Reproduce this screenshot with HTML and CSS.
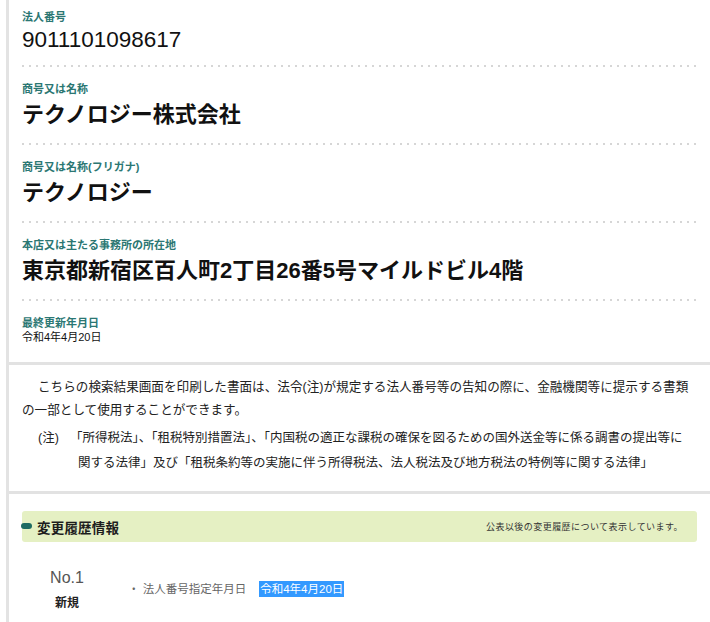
FILE: index.html
```html
<!DOCTYPE html>
<html lang="ja">
<head>
<meta charset="utf-8">
<title>法人番号 検索結果</title>
<link rel="stylesheet" href="styles.css">
</head>
<body>
<div class="page">
  <section class="info">
    <div class="field first">
      <div class="label">法人番号</div>
      <div class="value num">9011101098617</div>
    </div>
    <div class="dots"></div>
    <div class="field">
      <div class="label">商号又は名称</div>
      <div class="value">テクノロジー株式会社</div>
    </div>
    <div class="dots"></div>
    <div class="field">
      <div class="label">商号又は名称(フリガナ)</div>
      <div class="value">テクノロジー</div>
    </div>
    <div class="dots"></div>
    <div class="field">
      <div class="label">本店又は主たる事務所の所在地</div>
      <div class="value">東京都新宿区百人町2丁目26番5号マイルドビル4階</div>
    </div>
    <div class="dots"></div>
    <div class="field last">
      <div class="label">最終更新年月日</div>
      <div class="date">令和4年4月20日</div>
    </div>
  </section>
  <div class="sep"></div>
  <section class="notice">
    <p class="lead">こちらの検索結果画面を印刷した書面は、法令(注)が規定する法人番号等の告知の際に、金融機関等に提示する書類<br>の一部として使用することができます。</p>
    <p class="note"><span class="note-mark">(注)</span>「所得税法」、「租税特別措置法」、「内国税の適正な課税の確保を図るための国外送金等に係る調書の提出等に<br>関する法律」及び「租税条約等の実施に伴う所得税法、法人税法及び地方税法の特例等に関する法律」</p>
  </section>
  <div class="sep"></div>
  <section class="history">
    <div class="banner">
      <span class="marker"></span>
      <h2 class="banner-title">変更履歴情報</h2>
      <span class="banner-note">公表以後の変更履歴について表示しています。</span>
    </div>
    <div class="entry">
      <div class="entry-no">
        <div class="no">No.1</div>
        <div class="kind">新規</div>
      </div>
      <ul class="entry-items">
        <li><span class="item-name">・ 法人番号指定年月日</span><span class="hl">令和4年4月20日</span></li>
      </ul>
    </div>
  </section>
</div>
</body>
</html>
```

FILE: styles.css
```css
html, body {
  margin: 0;
  padding: 0;
  background: #ffffff;
}
body {
  font-family: "Liberation Sans", "Noto Sans CJK JP", sans-serif;
  color: #111;
}
.page {
  margin-left: 6px;
  border-left: 3px solid #e3e3e3;
  min-height: 622px;
}
.info {
  padding: 0 10px 0 13px;
}
.field {
  padding: 15px 0 9px;
}
.field.first {
  padding-top: 10px;
}
.field.last {
  padding-bottom: 18px;
}
.label {
  font-size: 11px;
  line-height: 14px;
  font-weight: 700;
  color: #2b7773;
}
.value {
  font-size: 22px;
  line-height: 38px;
  font-weight: 700;
  color: #111;
}
.value.num {
  font-weight: 400;
  line-height: 32px;
  font-size: 22.5px;
}
.date {
  font-size: 11px;
  line-height: 14px;
  color: #111;
}
.dots {
  height: 2px;
  background-image: linear-gradient(to right, #d6d6d6 2px, transparent 2px);
  background-size: 7px 2px;
  background-repeat: repeat-x;
}
.sep {
  height: 3px;
  background: #e2e2e2;
}
.notice {
  padding: 11px 0 15px 13px;
}
.notice p {
  margin: 0;
}
.lead {
  font-size: 12.6px;
  line-height: 23px;
  text-indent: 16px;
  color: #222;
}
.note {
  margin-top: 4px !important;
  font-size: 12.5px;
  line-height: 25px;
  padding-left: 56px;
  text-indent: -40px;
  color: #222;
}
.note-mark {
  display: inline-block;
  width: 32px;
  text-indent: 0;
}
.history {
  padding: 17px 13px 0 13px;
}
.banner {
  position: relative;
  display: flex;
  align-items: center;
  height: 31px;
  margin-right: 0;
  width: 675px;
  background: #e5f0c3;
  border-radius: 3px;
  padding: 0 14px 0 15px;
  box-sizing: border-box;
}
.marker {
  position: absolute;
  left: -1px;
  top: 12px;
  width: 11px;
  height: 6px;
  border-radius: 3px;
  background: #1e6b62;
}
.banner-title {
  margin: 0;
  font-size: 13.5px;
  font-weight: 700;
  color: #1d1d1d;
  letter-spacing: 0.2px;
}
.banner-note {
  margin-left: auto;
  font-size: 9px;
  letter-spacing: 0.45px;
  color: #333;
}
.entry {
  display: flex;
  align-items: center;
  margin-top: 26px;
}
.entry-no {
  width: 90px;
  text-align: center;
}
.no {
  font-size: 16px;
  line-height: 20px;
  color: #555;
}
.kind {
  margin-top: 8px;
  font-size: 12px;
  line-height: 14px;
  font-weight: 700;
  color: #222;
}
.entry-items {
  list-style: none;
  margin: 0 0 0 16px;
  padding: 0;
}
.entry-items li {
  font-size: 11.5px;
  line-height: 16px;
  color: #666;
  display: flex;
  align-items: center;
}
.item-name {
  margin-right: 13px;
}
.hl {
  background: #3399ff;
  color: #ffffff;
  padding: 0 1px;
}
```
